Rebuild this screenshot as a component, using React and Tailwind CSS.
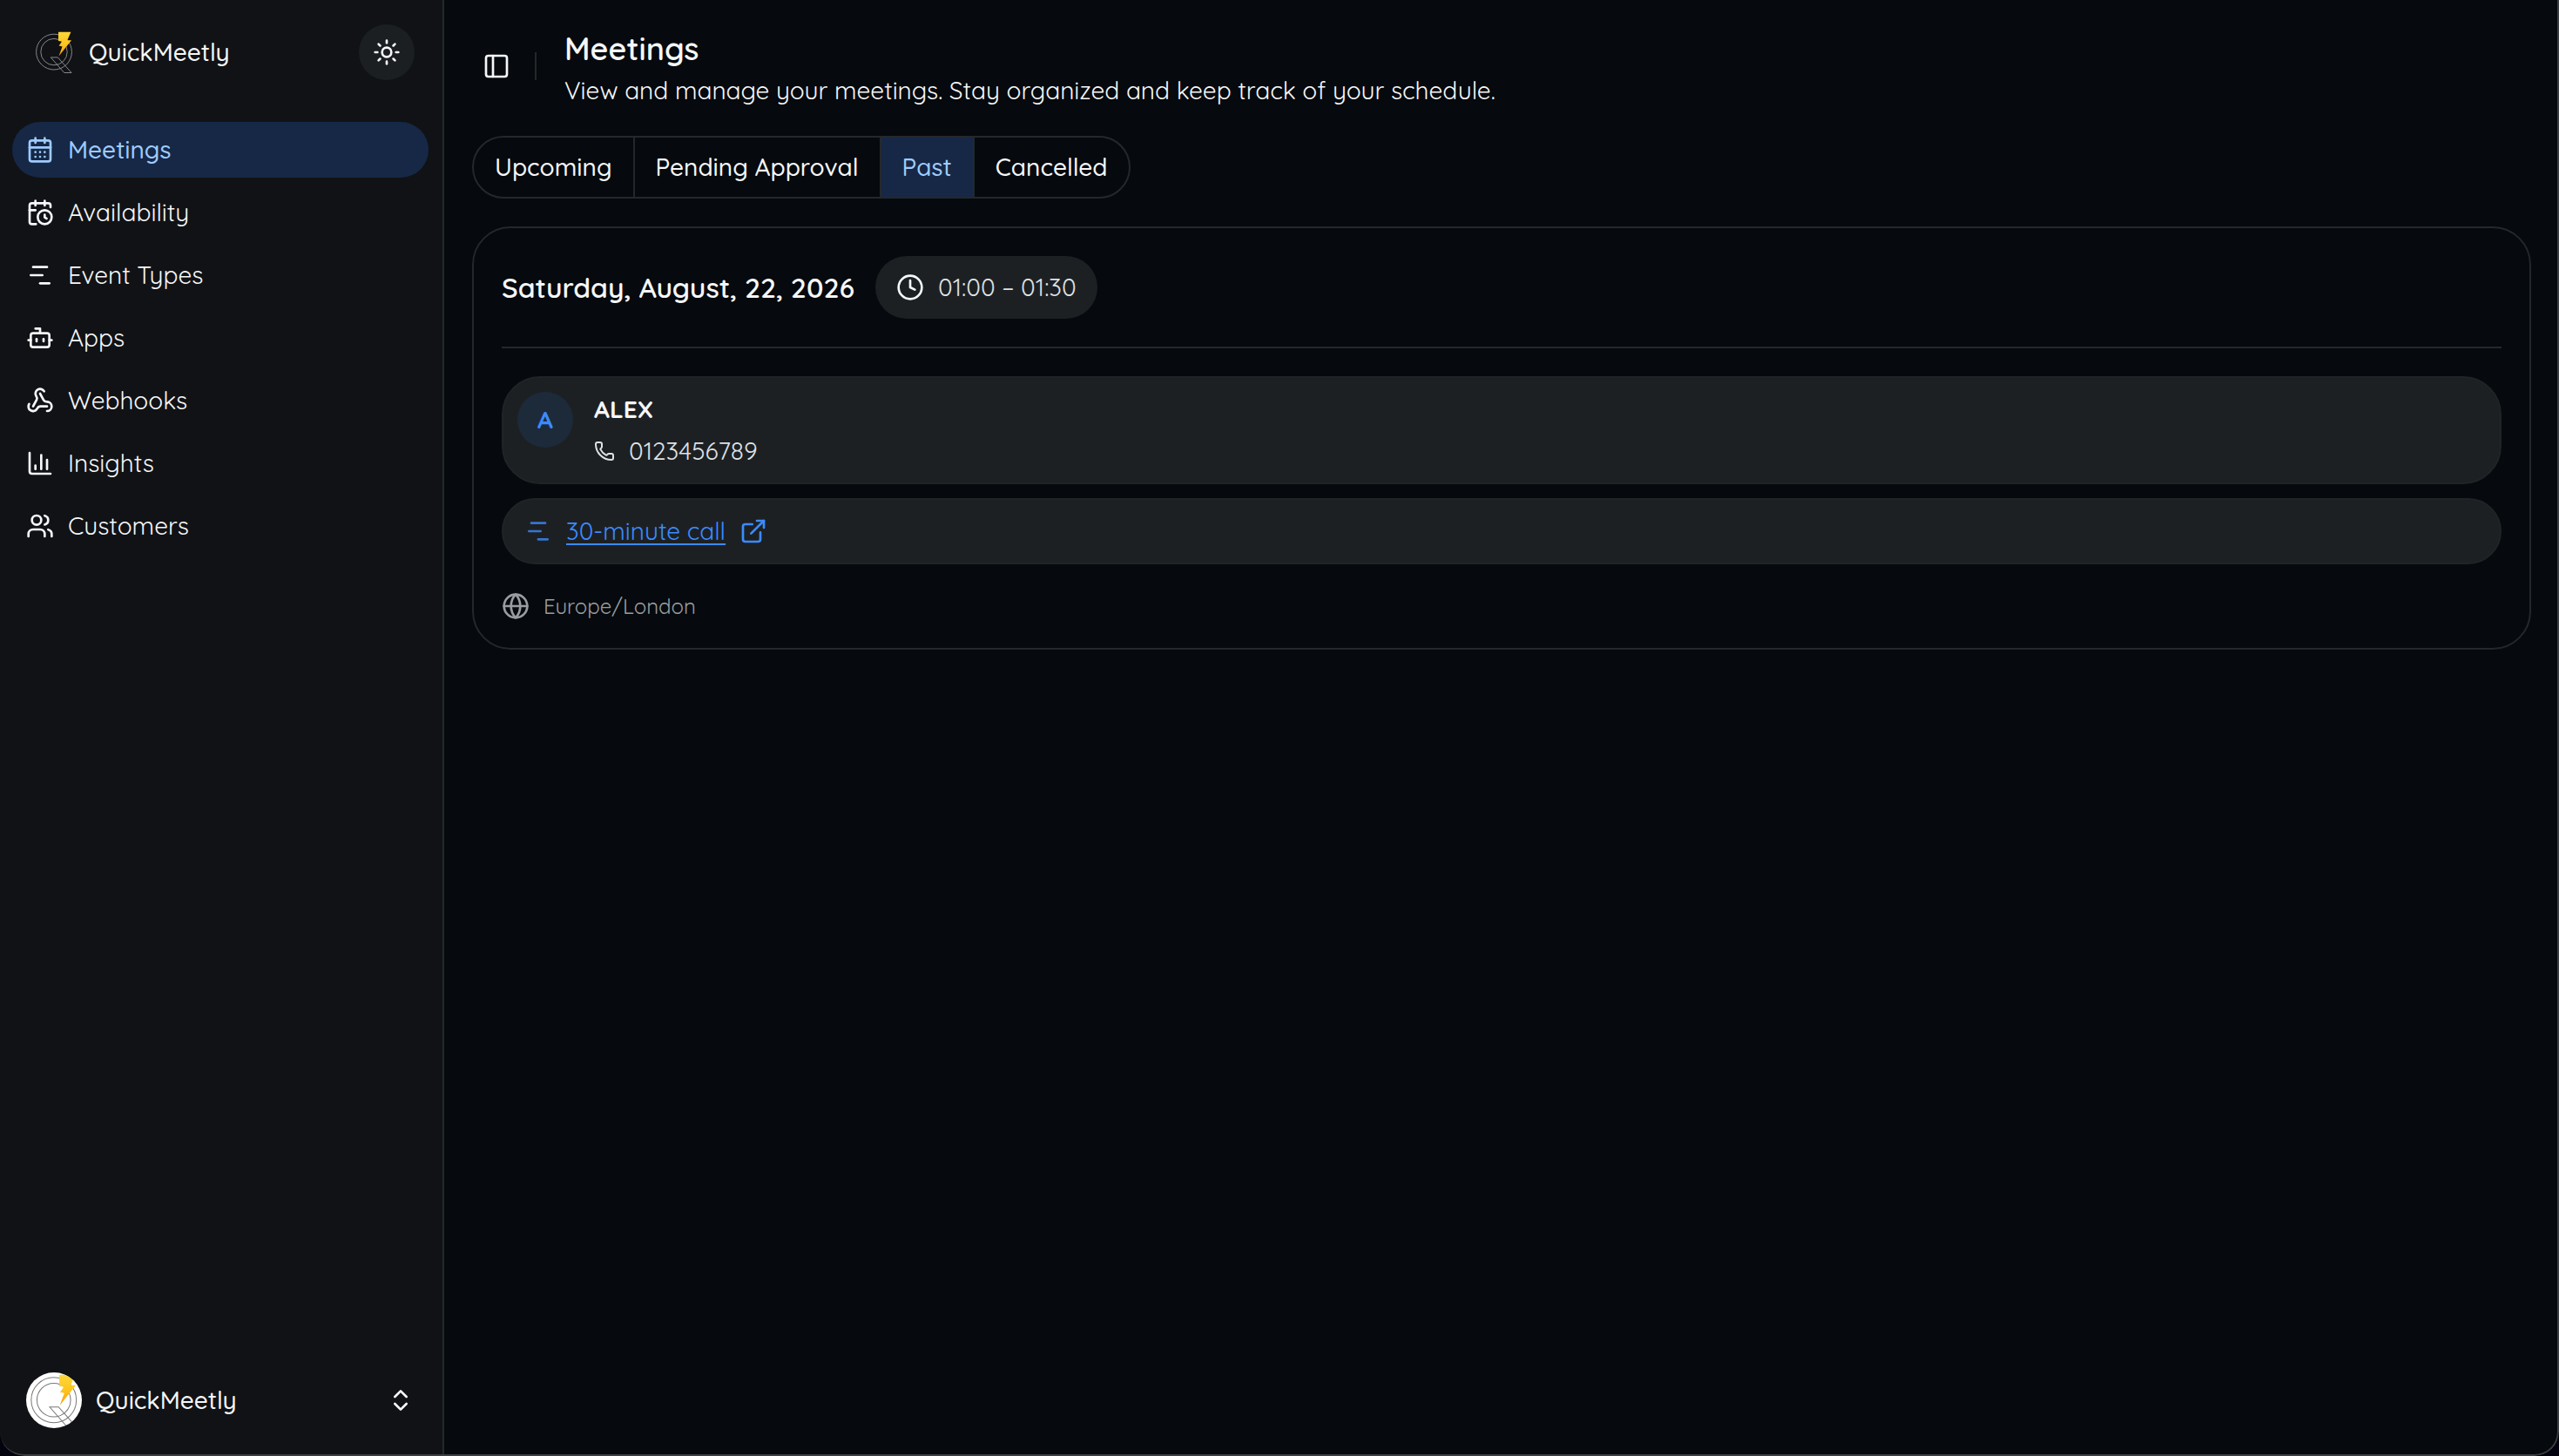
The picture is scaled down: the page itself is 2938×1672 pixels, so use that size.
import React, { useState } from 'react';
import {
    Bot, CalendarClock, CalendarDays, ChartColumn, ChartNoAxesGantt, ChevronsUpDown, Clock,
    ExternalLink, Globe, PanelLeft, Phone, Sun, Users, Webhook
} from 'lucide-react';

const NAV_ITEMS = [
    { label: 'Meetings', icon: CalendarDays },
    { label: 'Availability', icon: CalendarClock },
    { label: 'Event Types', icon: ChartNoAxesGantt },
    { label: 'Apps', icon: Bot },
    { label: 'Webhooks', icon: Webhook },
    { label: 'Insights', icon: ChartColumn },
    { label: 'Customers', icon: Users },
];

const TABS = ['Upcoming', 'Pending Approval', 'Past', 'Cancelled'];

const meetings = [
    {
        id: 1,
        date: 'Saturday, August, 22, 2026',
        time: '01:00 – 01:30',
        guest: 'ALEX',
        phone: '0123456789',
        event: '30-minute call',
        timezone: 'Europe/London',
    },
];

// Outlined Q with a lightning bolt
const Logo = ({ id, viewBox, className }) => (
    <svg viewBox={viewBox} className={className} fill="none" aria-hidden="true">
        <defs>
            <linearGradient id={id} x1="0" y1="0" x2="0" y2="1">
                <stop offset="0" stopColor="#ffd83a" />
                <stop offset="0.5" stopColor="#fdc51f" />
                <stop offset="1" stopColor="#f99a0c" />
            </linearGradient>
        </defs>
        <g stroke="currentColor" strokeWidth="0.8">
            <circle cx="62" cy="59.6" r="20.4" />
            <circle cx="62" cy="59.6" r="15.2" />
            <path d="M58.3 65.9h8L82 83.5h-8.3z" />
        </g>
        <path
            d="M67 36.8h14.4l-4.1 9.5H82L67.5 64.4l4-11-3.8-.8 3.4-5-4.1-.6z"
            fill={`url(#${id})`}
        />
    </svg>
);

const Sidebar = () => (
    <aside className="flex w-[510px] shrink-0 flex-col border-r-2 border-[#25282b] bg-[#111215] pt-7 pb-8">
        <div className="flex items-center justify-between px-8">
            <a href="#" className="flex items-center gap-4 font-medium">
                <Logo id="bolt-brand" viewBox="32 28 54 64" className="h-16 w-[54px] text-[#a2a4a6]" />
                QuickMeetly
            </a>
            <button aria-label="Toggle theme" className="flex size-16 items-center justify-center rounded-full bg-[#1c1f22]">
                <Sun className="size-8" />
            </button>
        </div>

        <nav className="mt-12 flex flex-col gap-2 pr-4 pl-[14px]">
            {NAV_ITEMS.map(({ label, icon: Icon }, i) => (
                <a
                    key={label}
                    href="#"
                    className={`flex h-16 items-center gap-4 rounded-full px-4 ${i === 0 ? 'bg-[#162846] font-medium text-[#9fcbff]' : ''}`}
                >
                    <Icon className="size-8" />
                    {label}
                </a>
            ))}
        </nav>

        <button className="mt-auto flex items-center gap-4 pr-8 pl-[30px]">
            <span className="size-16 overflow-hidden rounded-full bg-white">
                <Logo id="bolt-avatar" viewBox="37 34.6 50.4 50.4" className="size-16 text-[#77787a]" />
            </span>
            <span className="font-medium">QuickMeetly</span>
            <ChevronsUpDown className="ml-auto size-8" />
        </button>
    </aside>
);

const MeetingCard = ({ meeting }) => (
    <article className="rounded-[44px] border-2 border-[#25282b] p-8">
        <div className="flex items-center gap-6 border-b-2 border-[#25282b] pb-8">
            <h2 className="text-[32px] leading-[48px] font-semibold">{meeting.date}</h2>
            <div className="flex h-[72px] items-center gap-4 rounded-full bg-[#1d2023] px-6">
                <Clock className="size-8" />
                <span className="text-[#dfe2e5]">{meeting.time}</span>
            </div>
        </div>

        <div className="mt-8 flex items-start gap-6 rounded-[44px] border-2 border-[#212427] bg-[#1d2023] p-4">
            <div className="flex size-16 items-center justify-center rounded-full bg-[#1d2a3a] font-bold text-[#3b8bff]">
                {meeting.guest[0]}
            </div>
            <div className="flex flex-col gap-2">
                <p className="font-bold">{meeting.guest}</p>
                <p className="flex items-center gap-4 text-[#dfe2e5]">
                    <Phone className="size-6" />
                    {meeting.phone}
                </p>
            </div>
        </div>

        <div className="mt-4 flex items-center gap-4 rounded-full border-2 border-[#212427] bg-[#1d2023] px-6 py-4 text-[#3b8bff]">
            <ChartNoAxesGantt className="size-8 opacity-80" />
            <a href="#" className="flex items-center gap-4">
                <span className="underline underline-offset-4">{meeting.event}</span>
                <ExternalLink className="size-8" />
            </a>
        </div>

        <div className="mt-8 flex items-center gap-4 text-2xl leading-8 text-[#999da1]">
            <Globe className="size-8" />
            {meeting.timezone}
        </div>
    </article>
);

export default function App() {
    const [activeTab, setActiveTab] = useState('Past');

    return (
        <div className="bg-[#02030f]">
            <div className="relative flex min-h-screen overflow-hidden rounded-b-[28px] bg-[#06090d] font-['Quicksand','Open_Sans',sans-serif] text-[28px] leading-10 text-[#f5f7f9]">
                <Sidebar />

                <main className="flex min-w-0 flex-1 flex-col gap-8 px-8 pt-7 pb-8">
                    <header className="flex items-center">
                        <button aria-label="Toggle sidebar" className="flex size-14 items-center justify-center">
                            <PanelLeft className="size-8" />
                        </button>
                        <div className="mr-8 ml-4 h-8 w-0.5 bg-[#25282b]" />
                        <div>
                            <h1 className="text-4xl leading-[56px] font-semibold">Meetings</h1>
                            <p>View and manage your meetings. Stay organized and keep track of your schedule.</p>
                        </div>
                    </header>

                    <div role="tablist" className="flex h-[72px] self-start overflow-hidden rounded-full border-2 border-[#25282b]">
                        {TABS.map(tab => (
                            <button
                                key={tab}
                                role="tab"
                                aria-selected={tab === activeTab}
                                onClick={() => setActiveTab(tab)}
                                className={`border-r-2 border-[#25282b] px-6 font-medium last:border-r-0 ${tab === activeTab ? 'bg-[#162846] text-[#9fcbff]' : ''}`}
                            >
                                {tab}
                            </button>
                        ))}
                    </div>

                    {meetings.map(meeting => (
                        <MeetingCard key={meeting.id} meeting={meeting} />
                    ))}
                </main>

                {/* Window edge */}
                <div className="pointer-events-none absolute inset-0 rounded-b-[28px] border-r-2 border-b-2 border-[#3c3e41]" />
            </div>
        </div>
    );
}
